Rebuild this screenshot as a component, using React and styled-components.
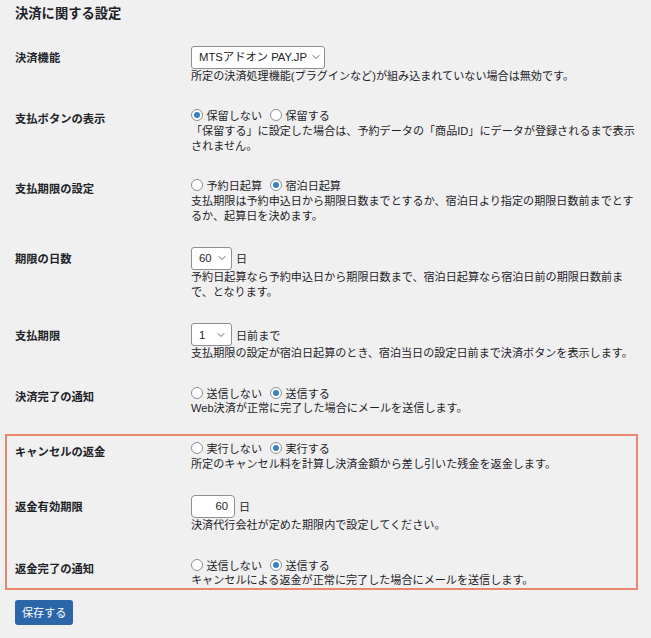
import React from "react";
import styled, { createGlobalStyle } from "styled-components";
import { ChevronDown } from "lucide-react";

const GlobalStyle = createGlobalStyle`
  body {
    margin: 0;
    background: #f0f0f1;
    color: #1d2327;
    font-family: "Liberation Sans", "Noto Sans CJK JP", sans-serif;
  }
`;

const Radio = ({ name, options, checked }) => (
  <RadioLine>
    {options.map((opt, i) => (
      <Option key={opt}>
        <RadioInput name={name} defaultChecked={i === checked} />
        {opt}
      </Option>
    ))}
  </RadioLine>
);

const Select = ({ value, width, right }) => (
  <SelectWrap $w={width}>
    <SelectEl defaultValue={value}>
      <option value={value}>{value}</option>
    </SelectEl>
    <Chevron size={12} strokeWidth={1.8} $r={right} />
  </SelectWrap>
);

const SettingRow = ({ label, children }) => (
  <Row>
    <Label>{label}</Label>
    <Cell>{children}</Cell>
  </Row>
);

const App = () => {
  return (
    <Page>
      <GlobalStyle />
      <Title>決済に関する設定</Title>

      <SettingRow label="決済機能">
        <Controls>
          <Select value="MTSアドオン PAY.JP" width={134} right={3} />
        </Controls>
        <Desc>所定の決済処理機能(プラグインなど)が組み込まれていない場合は無効です。</Desc>
      </SettingRow>

      <SettingRow label="支払ボタンの表示">
        <Radio name="hold" options={["保留しない", "保留する"]} checked={0} />
        <Desc>
          「保留する」に設定した場合は、予約データの「商品ID」にデータが登録されるまで表示
          <br />
          されません。
        </Desc>
      </SettingRow>

      <SettingRow label="支払期限の設定">
        <Radio name="base" options={["予約日起算", "宿泊日起算"]} checked={1} />
        <Desc>支払期限は予約申込日から期限日数までとするか、宿泊日より指定の期限日数前までとするか、起算日を決めます。</Desc>
      </SettingRow>

      <SettingRow label="期限の日数">
        <Controls>
          <Select value="60" width={41} right={4} />
          <Unit>日</Unit>
        </Controls>
        <Desc>予約日起算なら予約申込日から期限日数まで、宿泊日起算なら宿泊日前の期限日数前まで、となります。</Desc>
      </SettingRow>

      <SettingRow label="支払期限">
        <Controls>
          <Select value="1" width={41} right={5} />
          <Unit>日前まで</Unit>
        </Controls>
        <Desc>支払期限の設定が宿泊日起算のとき、宿泊当日の設定日前まで決済ボタンを表示します。</Desc>
      </SettingRow>

      <SettingRow label="決済完了の通知">
        <Radio name="notice" options={["送信しない", "送信する"]} checked={1} />
        <Desc>Web決済が正常に完了した場合にメールを送信します。</Desc>
      </SettingRow>

      <Group>
        <SettingRow label="キャンセルの返金">
          <Radio name="refund" options={["実行しない", "実行する"]} checked={1} />
          <Desc>所定のキャンセル料を計算し決済金額から差し引いた残金を返金します。</Desc>
        </SettingRow>

        <SettingRow label="返金有効期限">
          <Controls>
            <NumberInput type="number" defaultValue={60} />
            <Unit>日</Unit>
          </Controls>
          <Desc>決済代行会社が定めた期限内で設定してください。</Desc>
        </SettingRow>

        <SettingRow label="返金完了の通知">
          <Radio name="refundNotice" options={["送信しない", "送信する"]} checked={1} />
          <Desc>キャンセルによる返金が正常に完了した場合にメールを送信します。</Desc>
        </SettingRow>
        <Highlight />
      </Group>

      <SaveButton>保存する</SaveButton>
    </Page>
  );
};

const Page = styled.div`
  padding: 5px 10px 20px 15px;
`;
const Title = styled.h2`
  margin: 0 0 10.5px;
  font-size: 13.3px;
  line-height: 18px;
  font-weight: 700;
  color: #1d2327;
`;
const Row = styled.div`
  display: grid;
  grid-template-columns: 176px 450px;
  padding: 12px 0 11.5px;
`;
const Label = styled.div`
  padding-top: 4.5px;
  font-size: 11.3px;
  line-height: 16px;
  font-weight: 700;
  color: #1d2327;
`;
const Cell = styled.div`
  display: flex;
  flex-direction: column;
  align-items: flex-start;
`;
const Controls = styled.div`
  display: flex;
  align-items: center;
  gap: 4px;
  height: 23px;
`;
const Unit = styled.span`
  font-size: 11.1px;
  color: #1d2327;
`;
const Desc = styled.p`
  margin: 0;
  width: 450px;
  font-size: 11.1px;
  line-height: 14.8px;
  color: #1d2327;
`;
const RadioLine = styled.div`
  display: flex;
  align-items: center;
  height: 17px;
  gap: 8px;
`;
const Option = styled.label`
  display: inline-flex;
  align-items: center;
  gap: 3.5px;
  font-size: 11.1px;
  color: #1d2327;
`;
const RadioInput = styled.input.attrs({ type: "radio" })`
  appearance: none;
  box-sizing: border-box;
  margin: 0;
  width: 12px;
  height: 12px;
  border: 1px solid #8c8f94;
  border-radius: 50%;
  background: #fff;
  display: inline-grid;
  place-content: center;
  flex: none;
  &:checked::before {
    content: "";
    width: 6px;
    height: 6px;
    border-radius: 50%;
    background: #3582c4;
  }
`;
const SelectWrap = styled.span`
  position: relative;
  display: inline-flex;
  width: ${(p) => p.$w}px;
`;
const SelectEl = styled.select`
  appearance: none;
  box-sizing: border-box;
  width: 100%;
  height: 23px;
  margin: 0;
  padding: 0 16px 0 7px;
  border: 1px solid #8c8f94;
  border-radius: 3px;
  background: #fff;
  font-family: inherit;
  font-size: 11.3px;
  color: #1d2327;
`;
const Chevron = styled(ChevronDown)`
  position: absolute;
  right: ${(p) => p.$r}px;
  top: 50%;
  transform: translateY(-50%);
  color: #50575e;
  pointer-events: none;
`;
const NumberInput = styled.input`
  box-sizing: border-box;
  width: 44px;
  height: 23px;
  margin: 0;
  padding: 0 6px;
  border: 1px solid #8c8f94;
  border-radius: 4px;
  background: #fff;
  font-family: inherit;
  font-size: 11.3px;
  color: #1d2327;
  text-align: right;
  appearance: textfield;
  &::-webkit-inner-spin-button,
  &::-webkit-outer-spin-button {
    -webkit-appearance: none;
    margin: 0;
  }
`;
const Group = styled.div`
  position: relative;
`;
const Highlight = styled.div`
  position: absolute;
  top: 6px;
  right: 3px;
  bottom: 10px;
  left: -10px;
  border: 2px solid #e9876e;
  pointer-events: none;
`;
const SaveButton = styled.button`
  display: block;
  height: 25px;
  margin: 0;
  padding: 0 7px;
  border: none;
  border-radius: 3px;
  background: #2a66a8;
  color: #fff;
  font-family: inherit;
  font-size: 11.1px;
`;

export default App;
